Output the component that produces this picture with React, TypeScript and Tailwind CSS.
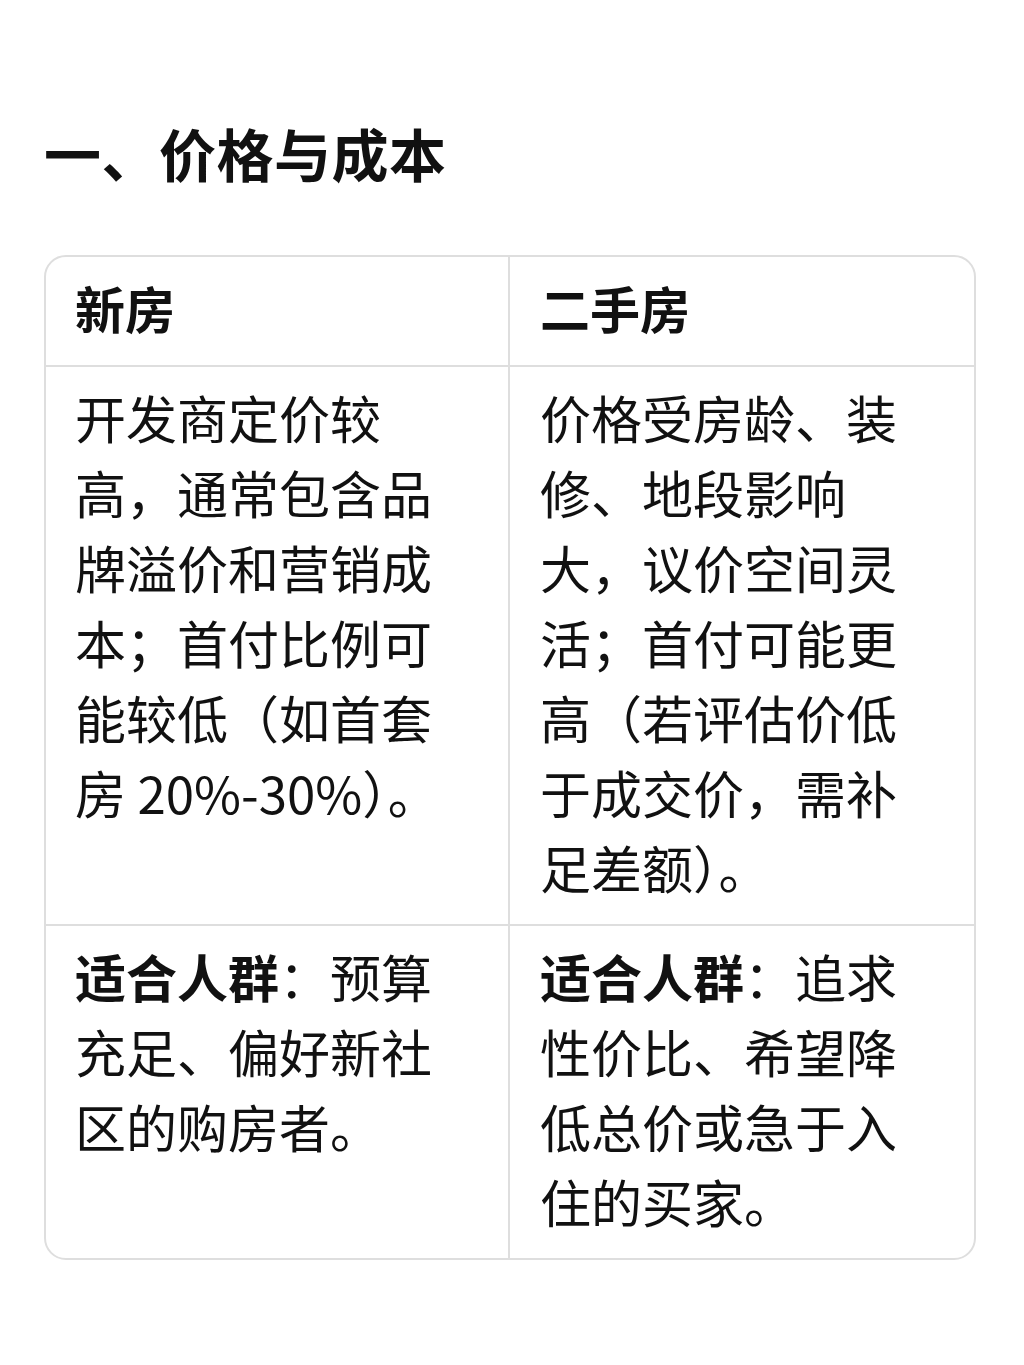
const font = { fontFamily: '"Noto Sans CJK SC", "Noto Sans", sans-serif' };

const rows: { left: React.ReactNode; right: React.ReactNode }[] = [
  {
    left: "开发商定价较高，通常包含品牌溢价和营销成本；首付比例可能较低（如首套房 20%-30%）。",
    right: "价格受房龄、装修、地段影响大，议价空间灵活；首付可能更高（若评估价低于成交价，需补足差额）。",
  },
  {
    left: (
      <>
        <span className="font-bold">适合人群</span>：预算充足、偏好新社区的购房者。
      </>
    ),
    right: (
      <>
        <span className="font-bold">适合人群</span>：追求性价比、希望降低总价或急于入住的买家。
      </>
    ),
  },
];

export default function App() {
  return (
    <div className="min-h-[1365px] w-[1024px] bg-white text-[#111111]" style={font}>
      <div className="px-[44px] pt-[112px]">
        <h1 className="text-[57px] font-bold leading-[80px] tracking-[0.5px]">一、价格与成本</h1>

        <div className="mt-[63px] w-[932px] overflow-hidden rounded-[22px] border-2 border-[#dedede]">
          <div className="grid grid-cols-2">
            <div className="border-r-2 border-b-2 border-[#dedede] px-[29px] pt-[13px] pb-[20px] text-[50px] font-bold leading-[75px]">
              新房
            </div>
            <div className="border-b-2 border-[#dedede] px-[30px] pt-[13px] pb-[20px] text-[50px] font-bold leading-[75px]">
              二手房
            </div>
            {rows.map((r, i) => (
              <div key={i} className="contents">
                <div
                  className={`border-r-2 border-[#dedede] px-[29px] pt-[13px] pb-[19px] text-[51px] leading-[75px] ${
                    i < rows.length - 1 ? "border-b-2" : ""
                  }`}
                >
                  {r.left}
                </div>
                <div
                  className={`border-[#dedede] px-[30px] pt-[13px] pb-[19px] text-[51px] leading-[75px] ${
                    i < rows.length - 1 ? "border-b-2" : ""
                  }`}
                >
                  {r.right}
                </div>
              </div>
            ))}
          </div>
        </div>
      </div>
    </div>
  );
}
